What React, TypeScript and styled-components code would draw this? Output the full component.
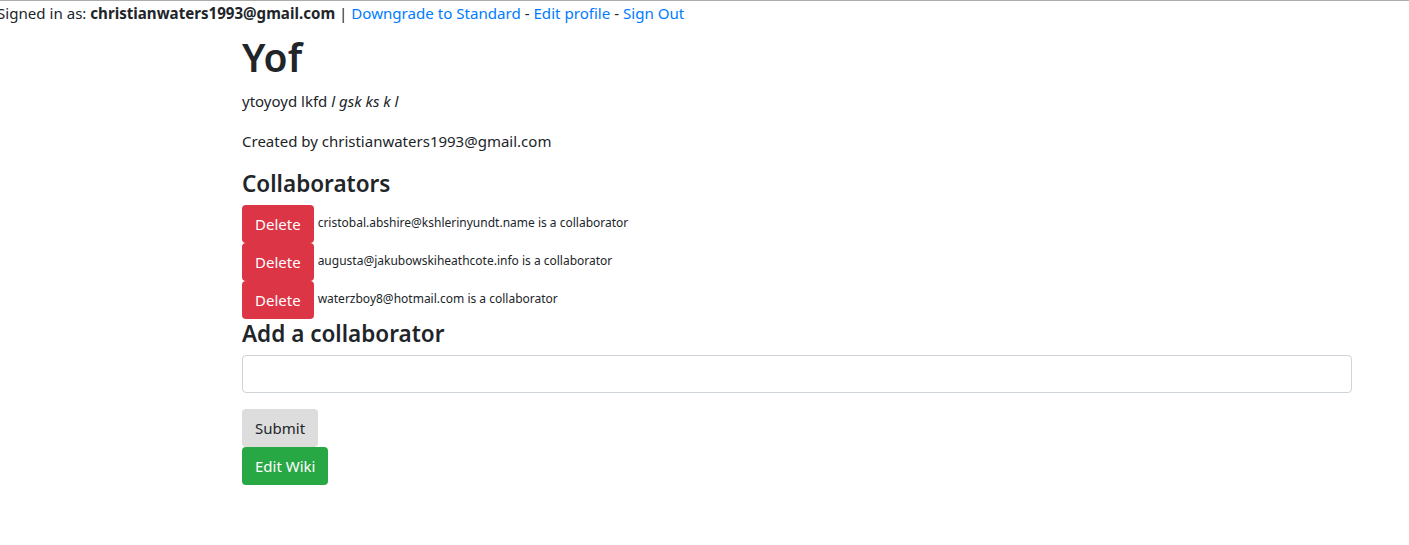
import * as React from 'react';
import styled, { createGlobalStyle } from 'styled-components';

const GlobalStyle = createGlobalStyle`
  body {
    margin: 0;
    font-family: "Noto Sans", "Open Sans", sans-serif;
    font-size: 15px;
    line-height: 24px;
    color: #212529;
    background: #fff;
  }
`;

const TopBar = styled.div`
  border-top: 1px solid #acacac;
  white-space: nowrap;
  font-size: 15.1px;
  line-height: 24px;
  margin-left: -3px;
`;

const Link = styled.a`
  color: #007bff;
  text-decoration: none;
`;

const Container = styled.div`
  width: 1110px;
  margin-left: 227px;
  padding: 0 15px;
`;

const Title = styled.h1`
  font-size: 39px;
  font-weight: 600;
  line-height: 48px;
  margin: 8px 0 8px;
`;

const Paragraph = styled.p`
  margin: 0 0 16px;
`;

const SubHeading = styled.h4`
  font-size: 22.5px;
  font-weight: 600;
  line-height: 29px;
  margin: 0 0 7px;
`;

const Button = styled.button<{ $variant: 'danger' | 'success' | 'light' }>`
  display: block;
  font-family: inherit;
  font-size: 15px;
  line-height: 24px;
  padding: 6px 12px;
  border: 1px solid transparent;
  border-radius: 4px;
  cursor: pointer;
  color: ${p => (p.$variant === 'light' ? '#212529' : '#fff')};
  background: ${p =>
    p.$variant === 'danger' ? '#dc3545' : p.$variant === 'success' ? '#28a745' : '#dddddd'};
`;

const CollaboratorRow = styled.div`
  display: flex;
  align-items: flex-start;
  gap: 4px;
`;

const CollaboratorText = styled.small`
  font-size: 12px;
  line-height: 18px;
  padding-top: 9px;
`;

const Input = styled.input`
  display: block;
  box-sizing: border-box;
  width: 100%;
  height: 38px;
  padding: 6px 12px;
  font-family: inherit;
  font-size: 15px;
  border: 1px solid #ced4da;
  border-radius: 4px;
  margin-bottom: 16px;
`;

const collaborators = [
  'cristobal.abshire@kshlerinyundt.name',
  'augusta@jakubowskiheathcote.info',
  'waterzboy8@hotmail.com',
];

export default function App() {
  return (
    <>
      <GlobalStyle />
      <TopBar>
        Signed in as: <b>christianwaters1993@gmail.com</b> |{' '}
        <Link href="#">Downgrade to Standard</Link> - <Link href="#">Edit profile</Link> -{' '}
        <Link href="#">Sign Out</Link>
      </TopBar>
      <Container>
        <Title>Yof</Title>
        <Paragraph>
          ytoyoyd lkfd <em>l gsk ks k l</em>
        </Paragraph>
        <Paragraph>Created by christianwaters1993@gmail.com</Paragraph>
        <SubHeading>Collaborators</SubHeading>
        {collaborators.map(email => (
          <CollaboratorRow key={email}>
            <Button $variant="danger">Delete</Button>
            <CollaboratorText>{email} is a collaborator</CollaboratorText>
          </CollaboratorRow>
        ))}
        <SubHeading>Add a collaborator</SubHeading>
        <form onSubmit={e => e.preventDefault()}>
          <Input type="text" />
          <Button $variant="light" type="submit">Submit</Button>
        </form>
        <Button $variant="success">Edit Wiki</Button>
      </Container>
    </>
  );
}
